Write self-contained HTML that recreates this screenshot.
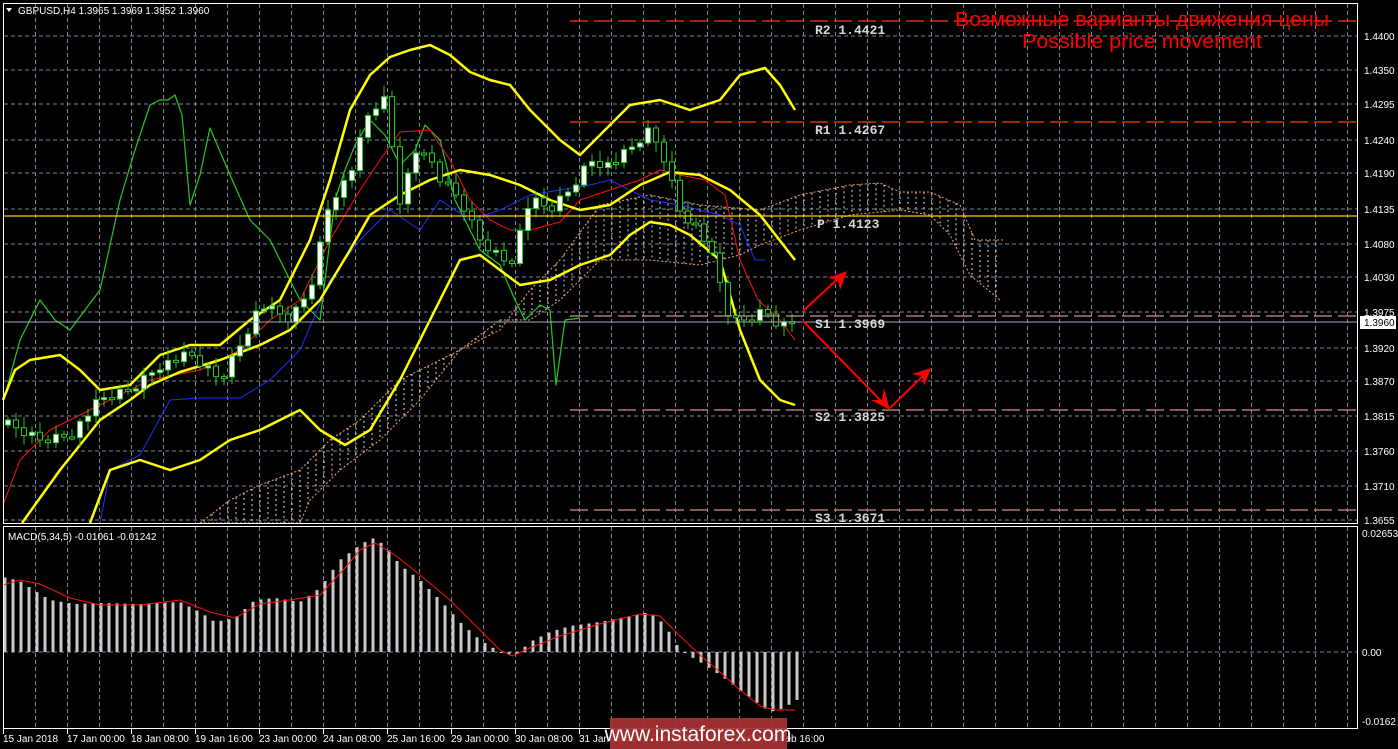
<!DOCTYPE html>
<html><head><meta charset="utf-8"><style>
html,body{margin:0;padding:0;background:#000;}
body{width:1398px;height:749px;overflow:hidden;position:relative;font-family:"Liberation Sans",sans-serif;}
svg{position:absolute;left:0;top:0;}
.ax{font:10px "Liberation Sans",sans-serif;fill:#fff;}
.lv{font:bold 13px "Liberation Mono",monospace;fill:#d8d8d8;}
</style></head><body>
<svg id="s" width="1398" height="749" viewBox="0 0 1398 749">
<g id="grid"></g>
<g id="cloud"></g>
<g id="lines"></g>
<g id="candles"></g>
<g id="macd"></g>
<line x1="570" y1="21" x2="1358" y2="21" stroke="#ff3a10" stroke-width="1.3" stroke-dasharray="18,6"/>
<line x1="570" y1="122" x2="1358" y2="122" stroke="#ff3a10" stroke-width="1.3" stroke-dasharray="18,6"/>
<line x1="4" y1="216" x2="1358" y2="216" stroke="#ffcc00" stroke-width="1.2"/>
<line x1="570" y1="316" x2="1358" y2="316" stroke="#d09090" stroke-width="1.2" stroke-dasharray="18,6"/>
<line x1="4" y1="322" x2="1358" y2="322" stroke="#a0a8b8" stroke-width="1"/>
<line x1="570" y1="410" x2="1358" y2="410" stroke="#d09090" stroke-width="1.2" stroke-dasharray="18,6"/>
<line x1="570" y1="510" x2="1358" y2="510" stroke="#d09090" stroke-width="1.2" stroke-dasharray="18,6"/>
<text class="lv" x="815" y="34">R2 1.4421</text>
<text class="lv" x="815" y="134">R1 1.4267</text>
<text class="lv" x="817" y="228">P 1.4123</text>
<text class="lv" x="815" y="328">S1 1.3969</text>
<text class="lv" x="815" y="421">S2 1.3825</text>
<text class="lv" x="815" y="522">S3 1.3671</text>
<text x="1142" y="26" text-anchor="middle" fill="#ff0000" font-family="Liberation Sans, sans-serif" font-size="20" textLength="374" lengthAdjust="spacingAndGlyphs">Возможные варианты движения цены</text>
<text x="1142" y="48" text-anchor="middle" fill="#ff0000" font-family="Liberation Sans, sans-serif" font-size="20" textLength="240" lengthAdjust="spacingAndGlyphs">Possible price movement</text>
<g stroke="#ff0000" stroke-width="2" fill="#ff0000">
<line x1="803" y1="311" x2="842" y2="275"/>
<polygon points="847,271 828,278 838,280 840,290" stroke="none"/>
<line x1="803" y1="321" x2="886" y2="406"/>
<polygon points="890,410 871,400 882,400 884,388" stroke="none"/>
<line x1="890" y1="408" x2="927" y2="372"/>
<polygon points="931,368 912,374 922,376 924,386" stroke="none"/>
</g>
<rect x="3.5" y="3.5" width="1354" height="520" fill="none" stroke="#fff" stroke-width="1"/>
<rect x="3.5" y="526.5" width="1354" height="202" fill="none" stroke="#fff" stroke-width="1"/>
<text x="18" y="14" fill="#fff" font-size="10" font-family="Liberation Sans, sans-serif">GBPUSD,H4  1.3965 1.3969 1.3952 1.3960</text>
<polygon points="6,8 12,8 9,12" fill="#fff"/>
<text x="8" y="540" fill="#fff" font-size="10" font-family="Liberation Sans, sans-serif">MACD(5,34,5) -0.01061 -0.01242</text>
<g class="ax">
<text x="1364" y="40">1.4400</text><text x="1364" y="74">1.4350</text><text x="1364" y="108">1.4295</text>
<text x="1364" y="144">1.4240</text><text x="1364" y="177">1.4190</text><text x="1364" y="213">1.4135</text>
<text x="1364" y="248">1.4080</text><text x="1364" y="281">1.4030</text><text x="1364" y="316">1.3975</text>
<text x="1364" y="352">1.3920</text><text x="1364" y="385">1.3870</text><text x="1364" y="420">1.3815</text>
<text x="1364" y="455">1.3760</text><text x="1364" y="490">1.3710</text><text x="1364" y="524">1.3655</text>
<text x="1362" y="537">0.02653</text><text x="1362" y="656">0.00</text><text x="1362" y="725">-0.0162</text>
</g>
<rect x="1360" y="316" width="36" height="13" fill="#fff"/>
<text x="1364" y="326" font-size="10" fill="#000" font-family="Liberation Sans, sans-serif">1.3960</text>
<g class="ax">
<text x="3" y="742">15 Jan 2018</text><text x="67" y="742">17 Jan 00:00</text><text x="131" y="742">18 Jan 08:00</text>
<text x="195" y="742">19 Jan 16:00</text><text x="259" y="742">23 Jan 00:00</text><text x="323" y="742">24 Jan 08:00</text>
<text x="387" y="742">25 Jan 16:00</text><text x="451" y="742">29 Jan 00:00</text><text x="515" y="742">30 Jan 08:00</text>
<text x="579" y="742">31 Jan 16:00</text><text x="643" y="742">2 Feb 00:00</text><text x="707" y="742">5 Feb 08:00</text>
<text x="771" y="742">6 Feb 16:00</text>
</g>
<g id="ticks"></g>
<rect x="610" y="718" width="177" height="31" fill="#a83236" opacity="0.93"/>
<text x="698" y="741" text-anchor="middle" fill="#fff" font-size="21" font-family="Liberation Sans, sans-serif">www.instaforex.com</text>
</svg>
<script>
var NS="http://www.w3.org/2000/svg";
function el(p,t,a){var e=document.createElementNS(NS,t);for(var k in a)e.setAttribute(k,a[k]);document.getElementById(p).appendChild(e);return e;}
function interp(P,x){if(x<=P[0][0])return P[0][1];for(var i=1;i<P.length;i++){if(x<=P[i][0]){var a=P[i-1],b=P[i];return a[1]+(b[1]-a[1])*(x-a[0])/(b[0]-a[0]);}}return P[P.length-1][1];}
function pl(pts,c,w){el("lines","polyline",{points:pts.map(function(p){return p.join(",")}).join(" "),fill:"none",stroke:c,"stroke-width":w,"stroke-linejoin":"round"});}
var hy=[36,70,104,140,173,209,244,277,312,348,381,416,451,486,520];
hy.forEach(function(y){el("grid","line",{x1:4,y1:y,x2:1358,y2:y,stroke:"#7a8597","stroke-width":1,"stroke-dasharray":"4,3"});});
el("grid","line",{x1:4,y1:652,x2:1358,y2:652,stroke:"#7a8597","stroke-width":1,"stroke-dasharray":"4,3"});
for(var x=35.5;x<1358;x+=32){el("grid","line",{x1:x,y1:4,x2:x,y2:523,stroke:"#7a8597","stroke-width":1,"stroke-dasharray":"4,3"});el("grid","line",{x1:x,y1:527,x2:x,y2:728,stroke:"#7a8597","stroke-width":1,"stroke-dasharray":"4,3"});}
for(var x=3.5;x<830;x+=64){el("ticks","line",{x1:x,y1:729,x2:x,y2:734,stroke:"#fff","stroke-width":1});}
var ct=[[200,523],[230,500],[260,485],[300,470],[330,440],[360,420],[400,380],[450,355],[500,330],[530,290],[560,260],[600,205],[650,195],[700,205],[760,210],[800,195],[850,185],[880,183],[900,192],[930,192],[960,205],[975,240],[1005,240]];
var cb=[[200,523],[300,523],[310,500],[340,470],[380,440],[420,400],[460,350],[500,320],[530,320],[560,300],[600,260],[650,260],[700,265],[740,255],[760,245],[800,230],[850,215],[900,210],[930,215],[950,235],[970,275],[1000,300]];
for(var x=204;x<1004;x+=8){var a=interp(ct,x),b=interp(cb,x);el("cloud","line",{x1:x,y1:Math.min(a,b),x2:x,y2:Math.max(a,b),stroke:"#d8d8d8","stroke-width":1,"stroke-dasharray":"2,3"});}
el("cloud","polyline",{points:ct.map(function(p){return p.join(",")}).join(" "),fill:"none",stroke:"#f4a460","stroke-width":1,"stroke-dasharray":"2,2"});
el("cloud","polyline",{points:cb.map(function(p){return p.join(",")}).join(" "),fill:"none",stroke:"#f4a460","stroke-width":1,"stroke-dasharray":"2,2"});
pl([[5,395],[20,340],[40,300],[55,320],[70,330],[100,290],[120,200],[135,150],[150,105],[160,100],[168,100],[175,95],[182,115],[190,205],[200,175],[210,128],[230,175],[250,220],[270,240],[300,300],[320,320],[335,200],[345,170],[355,145],[370,120],[385,135],[400,165],[415,150],[425,125],[440,140],[455,200],[480,250],[500,265],[515,300],[525,320],[540,305],[550,310],[556,385],[565,320],[580,318]],"#22cc22",1.2);
pl([[3,505],[20,460],[50,430],[90,410],[120,395],[150,380],[200,370],[240,350],[270,320],[300,300],[330,240],[360,190],[380,160],[400,132],[430,130],[450,160],[470,200],[490,220],[510,230],[530,230],[560,222],[580,200],[610,190],[640,180],[660,170],[680,175],[705,180],[725,195],[740,260],[758,300],[780,320],[795,340]],"#ff1010",1);
pl([[100,523],[110,470],[140,455],[170,400],[200,398],[240,398],[270,380],[300,350],[330,280],[360,240],[390,210],[420,230],[440,200],[470,220],[500,210],[530,195],[560,190],[590,185],[610,180],[650,200],[680,205],[720,215],[740,225],[755,260],[765,260]],"#2030ff",1);
pl([[3,400],[15,370],[30,360],[60,355],[80,370],[100,390],[130,385],[160,355],[190,345],[220,345],[250,320],[280,300],[310,240],[330,180],[350,110],[370,75],[390,57],[410,50],[430,45],[450,55],[470,72],[490,80],[510,85],[530,110],[560,140],[580,155],[600,135],[630,105],[660,100],[690,110],[720,100],[740,75],[765,68],[780,85],[795,110]],"#ffff00",2.5);
pl([[22,523],[60,470],[100,420],[130,400],[150,385],[180,372],[220,360],[260,345],[290,330],[320,300],[350,250],[370,215],[400,195],[430,180],[460,170],[490,175],[520,185],[550,200],[580,210],[610,205],[640,185],[670,172],[700,175],[730,190],[760,215],[795,260]],"#ffff00",2.5);
pl([[90,523],[110,470],[140,460],[170,470],[200,460],[230,440],[260,430],[300,410],[320,430],[345,445],[370,430],[400,380],[430,320],[460,260],[480,255],[500,270],[520,285],[550,280],[580,265],[610,255],[630,235],[650,222],[670,225],[690,235],[720,260],[740,330],[760,380],[780,400],[795,405]],"#ffff00",2.5);
var cp=[[8,425],[40,440],[70,435],[100,400],[130,390],[160,365],[190,355],[220,380],[240,345],[260,305],[290,320],[310,290],[330,200],[350,175],[370,110],[385,100],[400,200],[420,140],[440,180],[460,200],[480,240],[510,265],[530,200],[550,210],[570,190],[590,160],[610,165],[630,150],[650,130],[665,160],[680,210],[700,230],[715,265],[730,320],[745,320],[765,310],[780,325],[795,320]];
var prev=interp(cp,0);
for(var i=0;i<100;i++){var x=8+i*8;if(x>796)break;var c=interp(cp,x)+((i*37)%11-5);var o=prev;var hi=Math.min(o,c)-3-(i*13%9);var lo=Math.max(o,c)+3+(i*7%8);
el("candles","line",{x1:x,y1:hi,x2:x,y2:lo,stroke:"#22cc22","stroke-width":1});
var t=Math.min(o,c),h=Math.max(Math.abs(o-c),2);
el("candles","rect",{x:x-2.5,y:t,width:5,height:h,fill:c<o?"#fff":"#000",stroke:"#22cc22","stroke-width":1});prev=c;}
var mp=[[3,577],[20,581],[35,591],[50,600],[75,604],[100,603],[140,604],[180,602],[200,612],[215,622],[235,618],[255,600],[275,598],[300,602],[320,588],[340,560],[360,545],[372,538],[385,545],[400,565],[420,580],[440,600],[460,622],[480,640],[500,652],[515,656],[530,642],[550,632],[570,626],[600,622],[630,616],[650,612],[665,625],[680,650],[700,662],[720,675],[740,690],[760,705],[770,712],[785,708],[795,700]];
for(var x=5;x<=797;x+=8){var y=interp(mp,x);el("macd","rect",{x:x-1.5,y:Math.min(y,652),width:3,height:Math.max(Math.abs(652-y),1),fill:"#c8c8c8"});}
var sp=[[3,585],[20,580],[40,584],[70,598],[100,605],[140,605],[180,600],[210,612],[235,618],[260,604],[290,600],[320,595],[345,568],[360,550],[375,543],[395,555],[420,575],[450,600],[480,630],[500,650],[512,656],[530,648],[560,636],[600,624],[640,614],[660,616],[680,636],[700,655],[720,672],[740,690],[760,706],[775,710],[795,710]];
el("macd","polyline",{points:sp.map(function(p){return p.join(",")}).join(" "),fill:"none",stroke:"#ff1010","stroke-width":1});
</script>
</body></html>
